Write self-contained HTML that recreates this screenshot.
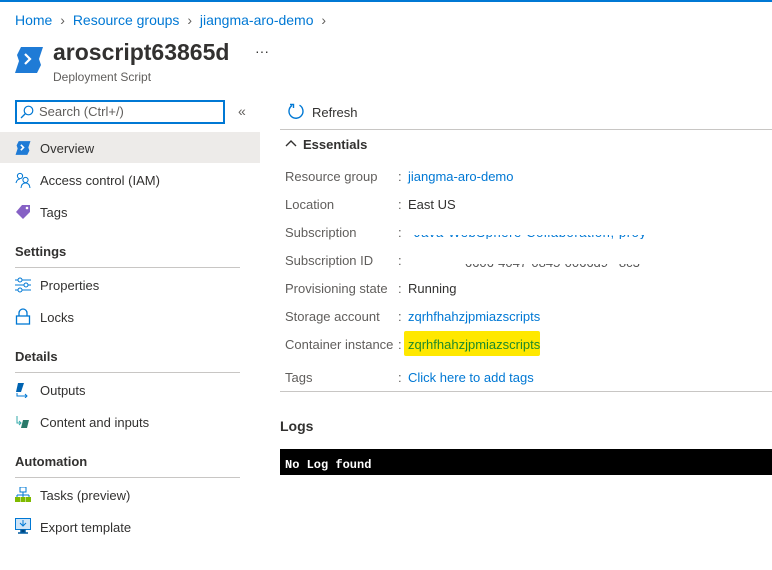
<!DOCTYPE html>
<html><head><style>
*{margin:0;padding:0;box-sizing:border-box}
body{width:772px;height:570px;background:#fff;font-family:"Segoe UI","Liberation Sans",sans-serif;font-size:13px;color:#323130;position:relative;overflow:hidden}
.a{position:absolute;white-space:nowrap}
.blue{color:#0078d4}
.nav{position:absolute;left:40px;font-size:13px;line-height:16px;margin-top:1px}
.ic{position:absolute;left:15px}
.hd{position:absolute;left:15px;font-size:13px;font-weight:bold;color:#323130;margin-top:1px}
.ln{position:absolute;left:15px;width:225px;height:1px;background:#c8c6c4}
.lb{position:absolute;left:285px;color:#605e5c;font-size:13px;margin-top:1px}
.co{position:absolute;left:398px;color:#605e5c;margin-top:1px}
.v{position:absolute;left:408px;font-size:13px;margin-top:1px}
</style></head><body>
<div class="a" style="left:0;top:0;width:772px;height:2px;background:#0078d4"></div>
<div class="a" style="left:15px;top:12px;font-size:14px"><span class="blue">Home</span> <span style="color:#605e5c;margin:0 4px">›</span> <span class="blue">Resource groups</span> <span style="color:#605e5c;margin:0 4px">›</span> <span class="blue">jiangma-aro-demo</span> <span style="color:#605e5c;margin:0 4px">›</span></div>
<svg class="a" style="left:15px;top:45px" width="28" height="30" viewBox="0 0 28 30"><path d="M6 2 L28 2 L24 14 L26 20 L22 28 L0 28 L4 16 L2 10 Z" fill="#1f7bd6"/><path d="M10 9 L15 14 L10 19" stroke="#fff" stroke-width="2.2" fill="none"/></svg>
<div class="a" style="left:53px;top:39px;font-size:23px;font-weight:bold;color:#323130">aroscript63865d</div>
<div class="a" style="left:255px;top:43px;font-size:14px">···</div>
<div class="a" style="left:53px;top:70px;font-size:12px;color:#605e5c">Deployment Script</div>
<div class="a" style="left:15px;top:100px;width:210px;height:24px;border:2px solid #0078d4"></div>
<svg class="a" style="left:20px;top:105px" width="14" height="14"><circle cx="8.5" cy="5.5" r="4.3" stroke="#0078d4" fill="none" stroke-width="1.2"/><path d="M5.5 8.5 L1 13" stroke="#0078d4" stroke-width="1.3"/></svg>
<div class="a" style="left:39px;top:104px;font-size:13px;color:#605e5c">Search (Ctrl+/)</div>
<div class="a" style="left:238px;top:103px;font-size:14px;color:#605e5c">«</div>
<div class="a" style="left:0;top:132px;width:260px;height:31px;background:#edebe9"></div>
<svg class="ic" style="top:140px" width="16" height="16" viewBox="0 0 28 30"><path d="M6 2 L28 2 L24 14 L26 20 L22 28 L0 28 L4 16 L2 10 Z" fill="#1f7bd6"/><path d="M10 9 L15 14 L10 19" stroke="#fff" stroke-width="3" fill="none"/></svg>
<div class="nav" style="top:140px">Overview</div>
<svg class="ic" style="top:172px" width="16" height="16"><circle cx="5" cy="4" r="2.6" stroke="#0078d4" fill="none"/><circle cx="10.5" cy="8" r="2.6" stroke="#0078d4" fill="none"/><path d="M1 11 Q2 7 5 7 M6 16 Q6.5 11 10.5 11 Q14.5 11 15 16" stroke="#0078d4" fill="none"/></svg>
<div class="nav" style="top:172px">Access control (IAM)</div>
<svg class="ic" style="top:204px" width="16" height="16"><path d="M7 1 L15 1 L15 8 L8 15 L1 8 Z" fill="#8661c5"/><circle cx="12" cy="4" r="1.3" fill="#fff"/></svg>
<div class="nav" style="top:204px">Tags</div>
<div class="hd" style="top:243px">Settings</div><div class="ln" style="top:267px"></div>
<svg class="ic" style="top:277px" width="16" height="16"><path d="M0 3H16M0 8H16M0 13H16" stroke="#0078d4"/><circle cx="5" cy="3" r="2" fill="#fff" stroke="#0078d4"/><circle cx="11" cy="8" r="2" fill="#fff" stroke="#0078d4"/><circle cx="5" cy="13" r="2" fill="#fff" stroke="#0078d4"/></svg>
<div class="nav" style="top:277px">Properties</div>
<svg class="ic" style="top:308px" width="16" height="17"><path d="M4 8V5a4 4 0 0 1 8 0v3" stroke="#0078d4" fill="none" stroke-width="1.3"/><rect x="1.5" y="8" width="13" height="8" stroke="#0078d4" fill="none" stroke-width="1.3"/></svg>
<div class="nav" style="top:309px">Locks</div>
<div class="hd" style="top:348px">Details</div><div class="ln" style="top:372px"></div>
<svg class="ic" style="top:382px" width="16" height="16"><path d="M3 1h6L6 10H1Z" fill="#0063b1"/><path d="M2 11v3h10M10 12l2 2-2 2" stroke="#0078d4" fill="none"/></svg>
<div class="nav" style="top:382px">Outputs</div>
<svg class="ic" style="top:414px" width="16" height="16"><path d="M8 6h6l-2 8H6Z" fill="#2a7a6a"/><path d="M2 2v7h4M4 7l2 2-2 2" stroke="#3aa"  fill="none"/></svg>
<div class="nav" style="top:414px">Content and inputs</div>
<div class="hd" style="top:453px">Automation</div><div class="ln" style="top:477px"></div>
<svg class="ic" style="top:487px" width="16" height="16"><rect x="5" y="0" width="6" height="5" stroke="#0078d4" fill="#fff"/><path d="M8 5v3M2 8h12M2 8v2M8 8v2M14 8v2" stroke="#0078d4"/><rect x="0" y="10" width="5" height="5" fill="#7fba00"/><rect x="5.5" y="10" width="5" height="5" fill="#7fba00"/><rect x="11" y="10" width="5" height="5" fill="#7fba00"/></svg>
<div class="nav" style="top:487px">Tasks (preview)</div>
<svg class="ic" style="top:518px" width="16" height="17"><rect x="0.5" y="0.5" width="15" height="11" fill="#cfe4f7" stroke="#0078d4"/><path d="M8 2v6M5 5l3 3 3-3" stroke="#0078d4" fill="none"/><path d="M6 12h4v2H6zM3 15h10" stroke="#005ba1" stroke-width="1.5"/></svg>
<div class="nav" style="top:519px">Export template</div>

<svg class="a" style="left:287px;top:102px" width="18" height="18"><path d="M12.5 3.2A7 7 0 1 1 5 3.5" stroke="#0078d4" stroke-width="1.4" fill="none"/><path d="M3 2.5h3.5v3.5" stroke="#0078d4" stroke-width="1.4" fill="none"/></svg>
<div class="a" style="left:312px;top:105px;font-size:13px">Refresh</div>
<div class="a" style="left:280px;top:129px;width:492px;height:1px;background:#c8c6c4"></div>
<svg class="a" style="left:285px;top:139px" width="12" height="9"><path d="M1 7L6 2l5 5" stroke="#323130" stroke-width="1.4" fill="none"/></svg>
<div class="a" style="left:303px;top:137px;font-size:13px;font-weight:bold;color:#323130">Essentials</div>

<div class="lb" style="top:168px">Resource group</div><div class="co" style="top:168px">:</div><div class="v blue" style="top:168px">jiangma-aro-demo</div>
<div class="lb" style="top:196px">Location</div><div class="co" style="top:196px">:</div><div class="v" style="top:196px">East US</div>
<div class="lb" style="top:224px">Subscription</div><div class="co" style="top:224px">:</div><div class="v" style="top:234px;left:414px;width:260px;height:4px;overflow:hidden"><div class="blue" style="margin-top:-10px;letter-spacing:0.6px">Java WebSphere Collaboration, proy </div></div>
<div class="lb" style="top:252px">Subscription ID</div><div class="co" style="top:252px">:</div><div class="v" style="top:263px;left:410px;width:240px;height:5px;overflow:hidden"><div style="margin-top:-9px;color:#555">&nbsp; &nbsp; &nbsp; &nbsp; &nbsp; &nbsp; &nbsp; -6606-4047-0845-0066d9 &nbsp;&nbsp;8c3</div></div>
<div class="lb" style="top:280px">Provisioning state</div><div class="co" style="top:280px">:</div><div class="v" style="top:280px">Running</div>
<div class="lb" style="top:308px">Storage account</div><div class="co" style="top:308px">:</div><div class="v blue" style="top:308px">zqrhfhahzjpmiazscripts</div>
<div class="a" style="left:404px;top:331px;width:136px;height:25px;background:#ffe800;border-radius:2px"></div>
<div class="lb" style="top:336px">Container instance</div><div class="co" style="top:336px">:</div><div class="v" style="top:336px;color:#1f8a2a">zqrhfhahzjpmiazscripts</div>
<div class="lb" style="top:369px">Tags</div><div class="co" style="top:369px">:</div><div class="v blue" style="top:369px">Click here to add tags</div>
<div class="a" style="left:280px;top:391px;width:492px;height:1px;background:#c8c6c4"></div>
<div class="a" style="left:280px;top:418px;font-size:14px;font-weight:bold;color:#323130">Logs</div>
<div class="a" style="left:280px;top:449px;width:492px;height:26px;background:#000"></div>
<div class="a" style="left:285px;top:458px;font-family:'Liberation Mono',monospace;font-weight:bold;font-size:12px;color:#fff">No Log found</div>
</body></html>
